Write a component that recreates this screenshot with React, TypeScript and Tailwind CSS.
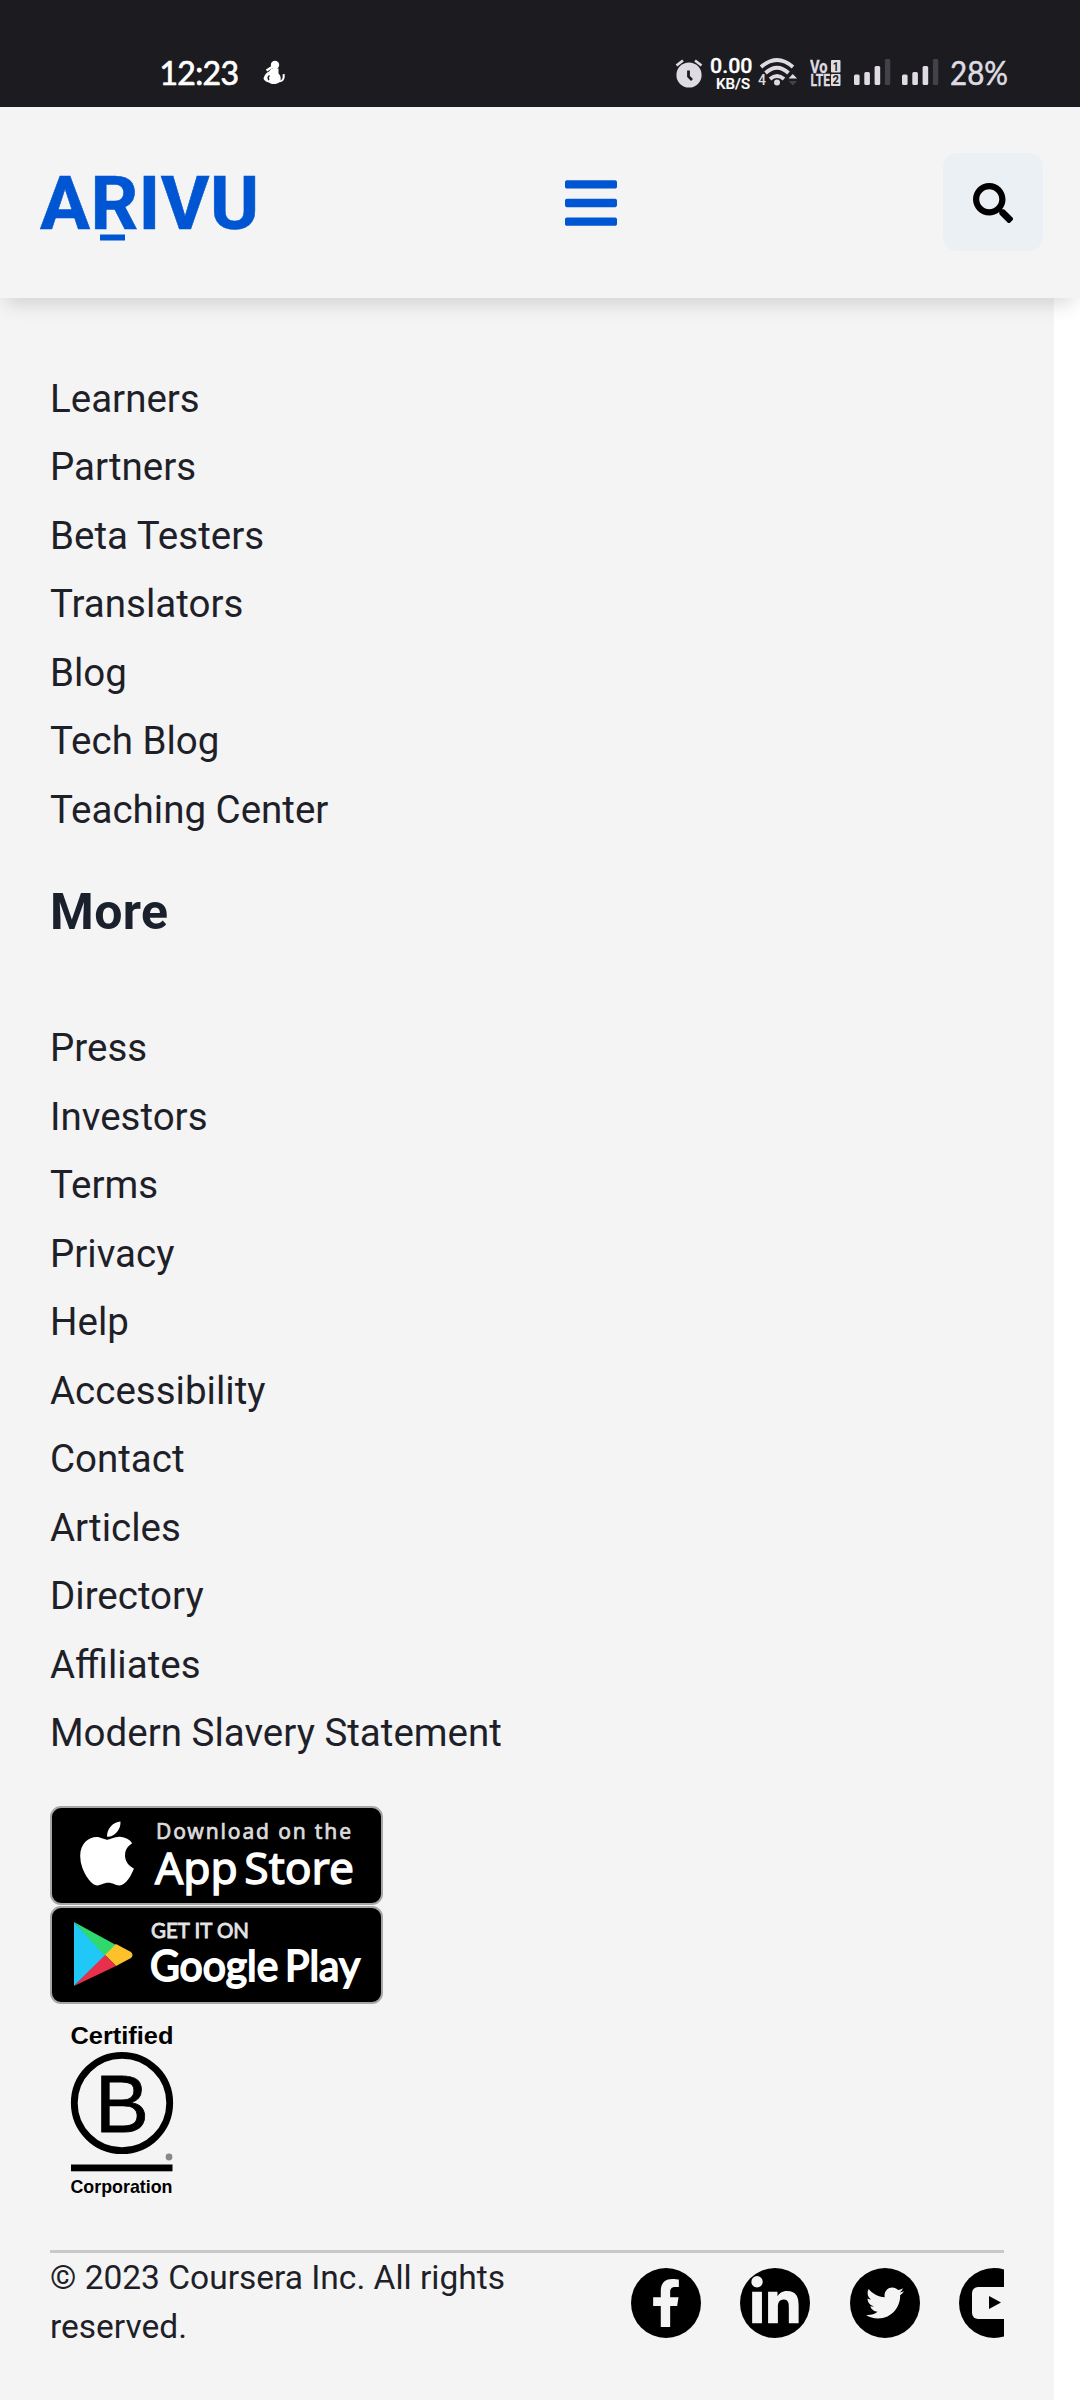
import React from "react";
import { FaApple, FaBars, FaFacebookF, FaLinkedinIn, FaSearch, FaTwitter } from "react-icons/fa";

const community = ["Learners", "Partners", "Beta Testers", "Translators", "Blog", "Tech Blog", "Teaching Center"];
const more = [
  "Press",
  "Investors",
  "Terms",
  "Privacy",
  "Help",
  "Accessibility",
  "Contact",
  "Articles",
  "Directory",
  "Affiliates",
  "Modern Slavery Statement",
];

function LinkList({ items }: { items: string[] }) {
  return (
    <ul className="text-[38.5px] leading-[68.5px] text-[#1f1f29]">
      {items.map((item) => (
        <li key={item}>
          <a href="#">{item}</a>
        </li>
      ))}
    </ul>
  );
}

function Signal() {
  return (
    <svg width="38" height="28" viewBox="0 0 38 28" className="shrink-0">
      <g fill="#dedce2">
        <rect x="0" y="16.5" width="5.6" height="10.5" rx="1.5" />
        <rect x="10.3" y="14" width="5.6" height="13" rx="1.5" />
        <rect x="20.6" y="8" width="5.6" height="19" rx="1.5" />
      </g>
      <rect x="30.9" y="1" width="5.4" height="26" rx="1.5" fill="#434248" />
    </svg>
  );
}

function StatusBar() {
  return (
    <div className="flex h-[107px] items-start bg-[#1c1b20] pl-[159px] pt-[56px] text-[#dedce2]">
      <svg className="shrink-0" width="82" height="40" viewBox="0 0 82 40">
        <text x="0.5" y="29" fontSize="32" fontFamily="Lato, sans-serif" fontWeight="400" fill="#fff" stroke="#fff" strokeWidth="0.7" textLength="79.5" lengthAdjust="spacing">
          12:23
        </text>
      </svg>
      <svg className="ml-[22px] shrink-0" width="24" height="32" viewBox="0 0 24 32" fill="#fff">
        <circle cx="12" cy="9" r="4.2" />
        <path d="M8.500 12.500h7v5c2.500 2.500 2.500 5 2 7 2-1 2.500-3 2-6l2-.800c1 5-1 8-5 8.600-3 2.400-8 2.200-10.500.200-3-.500-4.800-2-5.500-4 1-3.500 3-6 5.500-7z" />
        <path d="M3.500 14.500l5.500-3.500" stroke="#fff" strokeWidth="2.200" />
        <path d="M6.500 19.500q-2.500 2-.500 4.500" stroke="#1c1b20" strokeWidth="1.400" fill="none" />
      </svg>
      <svg className="ml-[387px] shrink-0" width="30" height="32" viewBox="0 0 30 32">
        <circle cx="15" cy="19" r="12.6" fill="#dedce2" />
        <path d="M2.5 9.5l6.5-5M27.5 9.5l-6.500-5" stroke="#dedce2" strokeWidth="2.700" />
        <path d="M14.500 14.500v6l3.500 3.500" fill="none" stroke="#1c1b20" strokeWidth="2.800" />
      </svg>
      <svg className="ml-[6px] shrink-0" width="44" height="40" viewBox="0 0 44 40" fill="#fff" fontFamily="Roboto, sans-serif" fontWeight="500">
        <text x="0" y="17" fontSize="20.500" stroke="#fff" strokeWidth="0.3" textLength="42.500" lengthAdjust="spacingAndGlyphs">0.00</text>
        <text x="6" y="32.500" fontSize="15.500" stroke="#fff" strokeWidth="0.2" textLength="34" lengthAdjust="spacingAndGlyphs">KB/S</text>
      </svg>
      <svg className="ml-[4px] shrink-0" width="42" height="34" viewBox="0 0 42 34">
        <g fill="none" stroke="#dedce2" strokeWidth="3.800">
          <path d="M3 11Q19 -3 35 11" />
          <path d="M7.500 17Q19 6.500 30.500 17" />
          <path d="M12 23Q19 17 26 23" />
        </g>
        <circle cx="19" cy="26.500" r="3" fill="#dedce2" />
        <text x="0" y="29" fontSize="14" fontFamily="Roboto, sans-serif" fontWeight="500" fill="#dedce2">4</text>
        <path d="M30.500 22.500l4.300-4.500 4.300 4.500z" fill="#dedce2" />
        <path d="M30.500 25h8.600l-4.300 4.500z" fill="#434248" />
      </svg>
      <svg className="ml-[10px] shrink-0" width="32" height="36" viewBox="0 0 32 36" fontFamily="Roboto, sans-serif" fontWeight="700" fill="#dedce2">
        <text x="0" y="16.500" fontSize="17.500" stroke="#dedce2" strokeWidth="0.300" textLength="17.500" lengthAdjust="spacingAndGlyphs">Vo</text>
        <text x="0.500" y="30" fontSize="17" stroke="#dedce2" strokeWidth="0.300" textLength="19.500" lengthAdjust="spacingAndGlyphs">LTE</text>
        <rect x="21" y="4" width="9.500" height="12.500" rx="1" />
        <rect x="21" y="18" width="9.500" height="12" rx="1" />
        <text x="22.800" y="14.500" fontSize="12" fill="#1c1b20" textLength="6" lengthAdjust="spacingAndGlyphs">1</text>
        <text x="22.500" y="28.300" fontSize="12" fill="#1c1b20" textLength="6.500" lengthAdjust="spacingAndGlyphs">2</text>
      </svg>
      <div className="ml-[12px] mt-[1.500px] flex gap-[10px]">
        <Signal />
        <Signal />
      </div>
      <svg className="ml-[10px] shrink-0" width="62" height="40" viewBox="0 0 62 40">
        <text x="0" y="29" fontSize="32" fontFamily="Lato, sans-serif" fill="#dedce2" stroke="#dedce2" strokeWidth="0.5" textLength="58" lengthAdjust="spacingAndGlyphs">
          28%
        </text>
      </svg>
    </div>
  );
}

function Header() {
  return (
    <header className="relative z-10 flex h-[191px] items-center justify-between bg-[#f4f4f4] pl-[40px] pr-[37px] shadow-[0_12px_18px_-6px_rgba(0,0,0,0.14)]">
      <svg width="222" height="90" viewBox="0 -5 222 90" fill="#0056d2">
        <text x="0" y="65.500" fontSize="74.500" fontFamily="Roboto, sans-serif" fontWeight="700" stroke="#0056d2" strokeWidth="0.600" textLength="219" lengthAdjust="spacing">
          ARIVU
        </text>
        <rect x="60" y="71.500" width="25" height="6" />
      </svg>
      <button className="-ml-[24px]" aria-label="Menu">
        <FaBars className="h-[60px] w-[52px] text-[#0056d2]" />
      </button>
      <button aria-label="Search" className="mb-[2px] flex h-[98px] w-[100px] items-center justify-center rounded-[14px] bg-[#ebf0f5]">
        <FaSearch className="mt-[2px] size-[40px] text-black" />
      </button>
    </header>
  );
}

function AppStoreBadge() {
  return (
    <div className="relative h-[99px] w-[333px] rounded-[11px] border-2 border-[#a6a6a6] bg-black">
      <FaApple className="absolute left-[26px] top-[9px] h-[73px] w-[58px] text-white" />
      <svg className="absolute -left-px -top-px" width="331" height="97" viewBox="0 0 331 97" fill="#fff" fontFamily="Noto Sans, sans-serif">
        <text x="105" y="32" fontSize="21" fill="#dcdcdc" stroke="#dcdcdc" strokeWidth="0.700" textLength="195" lengthAdjust="spacing">
          Download on the
        </text>
        <text x="104" y="76.500" fontSize="44" stroke="#fff" strokeWidth="1.300" textLength="199" wordSpacing="-5" lengthAdjust="spacingAndGlyphs">
          App Store
        </text>
      </svg>
    </div>
  );
}

function GooglePlayBadge() {
  return (
    <div className="relative h-[98px] w-[333px] rounded-[11px] border-2 border-[#a6a6a6] bg-black">
      <svg className="absolute -left-px -top-px" width="331" height="96" viewBox="0 0 331 96" fontFamily="Lato, sans-serif">
        <path d="M23 15v64l32-31z" fill="#20c8f8" />
        <path d="M23 15l42 23-11 11z" fill="#30d96b" />
        <path d="M65 37l15 8q3 3 0 6l-15 8-11-11z" fill="#fdc22b" />
        <path d="M23 79l31-31 11 11z" fill="#e8304c" />
        <text x="100" y="31" fontSize="21.500" fill="#e4e4e4" stroke="#e4e4e4" strokeWidth="0.900" textLength="98" lengthAdjust="spacingAndGlyphs">
          GET IT ON
        </text>
        <text x="99" y="73.500" fontSize="43" fill="#fff" stroke="#fff" strokeWidth="1.900" textLength="210" wordSpacing="-4" lengthAdjust="spacingAndGlyphs">
          Google Play
        </text>
      </svg>
    </div>
  );
}

function CertifiedBadge() {
  return (
    <svg className="ml-[20px] mt-[16px] block" width="106" height="184" viewBox="0 0 106 184" fontFamily="Liberation Sans, sans-serif">
      <text x="0.500" y="24" fontSize="24.500" fontWeight="700" textLength="103" lengthAdjust="spacingAndGlyphs">Certified</text>
      <circle cx="52" cy="83" r="47.700" fill="none" stroke="#000" strokeWidth="6.800" />
      <text x="25" y="111.500" fontSize="81" stroke="#000" strokeWidth="0.800" textLength="54" lengthAdjust="spacingAndGlyphs">B</text>
      <circle cx="99" cy="137" r="3.400" fill="#888" />
      <rect x="1" y="144.500" width="101.500" height="6.800" />
      <text x="0.500" y="173" fontSize="18.500" fontWeight="700" textLength="102" lengthAdjust="spacingAndGlyphs">Corporation</text>
    </svg>
  );
}

function Disc({ children }: { children: React.ReactNode }) {
  return (
    <a href="#" className="flex size-[70px] shrink-0 items-center justify-center rounded-full bg-black text-[#f4f4f4]">
      {children}
    </a>
  );
}

export default function App() {
  return (
    <div className="flex h-[2400px] w-[1080px] flex-col overflow-hidden bg-white font-['Roboto',sans-serif]">
      <StatusBar />
      <Header />
      <footer className="w-[1054px] grow bg-[#f4f4f4] pl-[50px] pr-[50px] pt-[66.500px]">
        <LinkList items={community} />
        <h3 className="mt-[37.500px] text-[50px] font-bold leading-[60px] tracking-[0.4px] text-[#1a202c]">More</h3>
        <div className="mt-[72.500px]">
          <LinkList items={more} />
        </div>
        <div className="mt-[38px] flex flex-col">
          <AppStoreBadge />
          <div className="mt-px">
            <GooglePlayBadge />
          </div>
          <CertifiedBadge />
        </div>
        <div className="mt-[46px] flex justify-between overflow-hidden border-t-[3px] border-[#c9c9c9]">
          <p className="w-[480px] text-[33.500px] leading-[49.500px] text-[#1f1f29]">© 2023 Coursera Inc. All rights reserved.</p>
          <div className="flex w-[373px] shrink-0 gap-[39.400px] pt-[15px]">
            <Disc>
              <FaFacebookF className="h-[52px] w-[30px]" />
            </Disc>
            <Disc>
              <FaLinkedinIn className="size-[54px]" />
            </Disc>
            <Disc>
              <FaTwitter className="size-[38px]" />
            </Disc>
            <Disc>
              <svg width="44" height="32" viewBox="0 0 44 32">
                <rect width="44" height="32" rx="6" fill="#f4f4f4" />
                <path d="M17 9v13l12-6.500z" fill="#000" />
              </svg>
            </Disc>
          </div>
        </div>
      </footer>
    </div>
  );
}
